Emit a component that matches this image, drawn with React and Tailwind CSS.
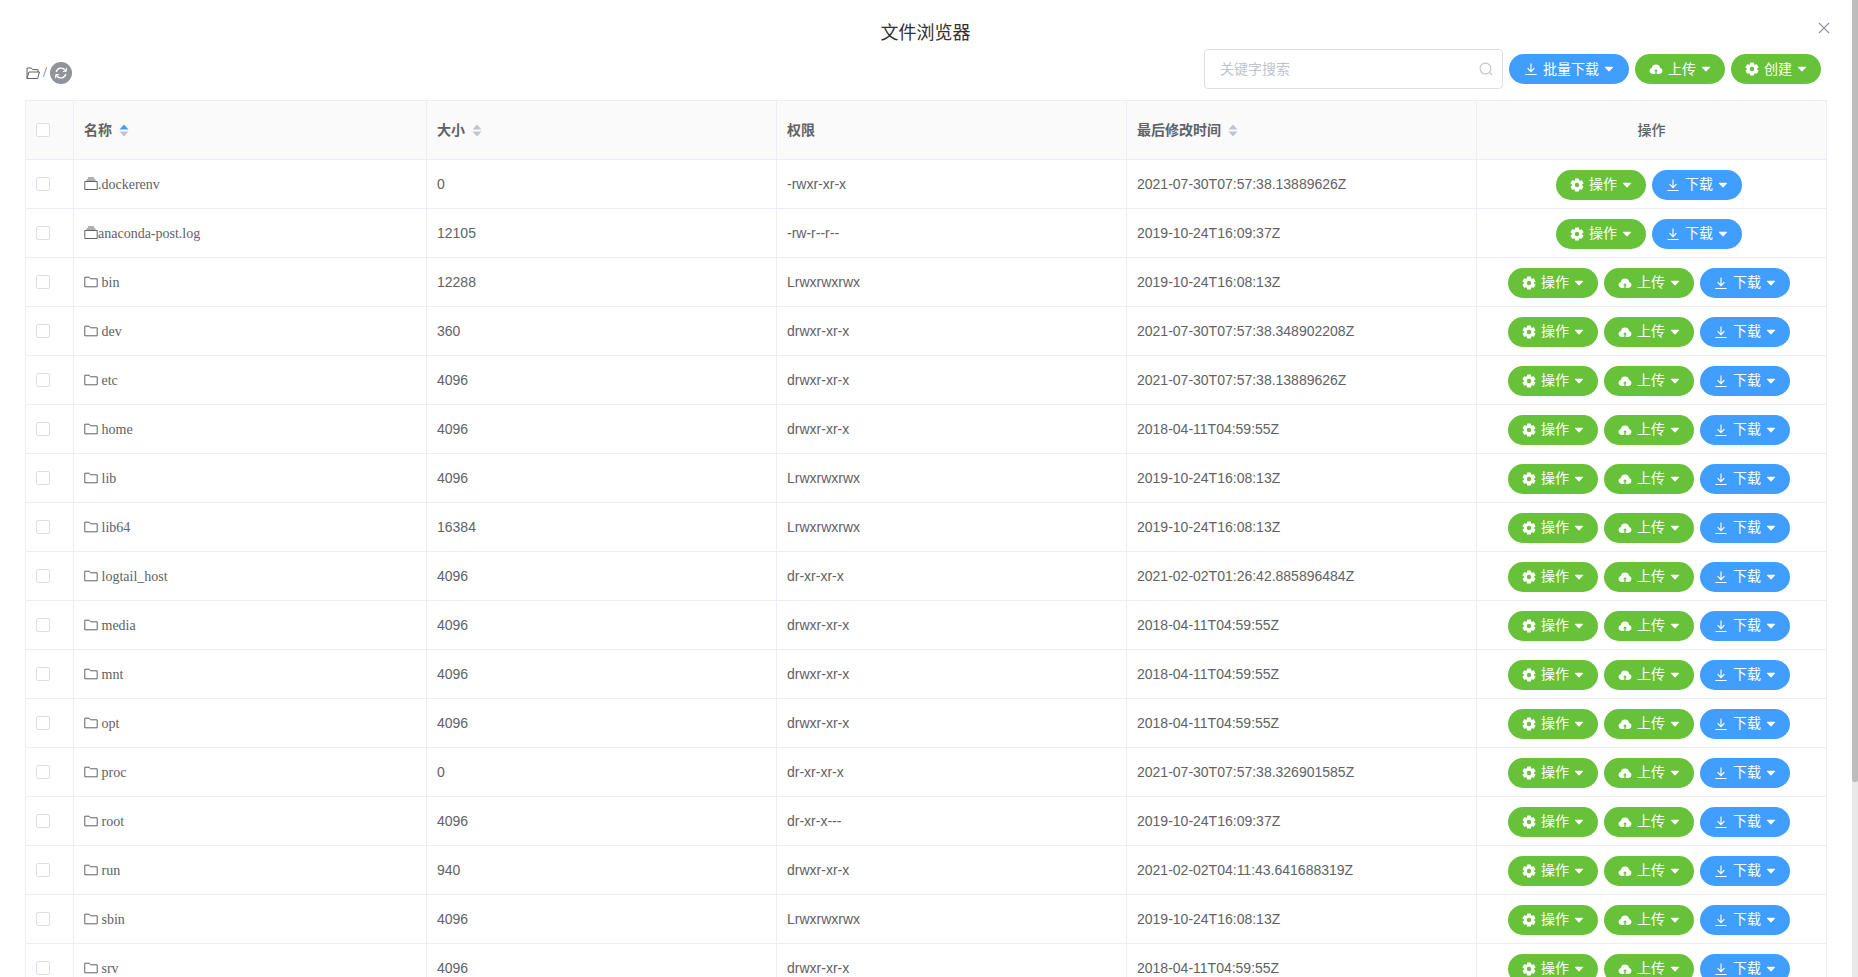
import React from "react";

const rows = [
  [".dockerenv", "0", "-rwxr-xr-x", "2021-07-30T07:57:38.13889626Z", "file"],
  ["anaconda-post.log", "12105", "-rw-r--r--", "2019-10-24T16:09:37Z", "file"],
  ["bin", "12288", "Lrwxrwxrwx", "2019-10-24T16:08:13Z", "dir"],
  ["dev", "360", "drwxr-xr-x", "2021-07-30T07:57:38.348902208Z", "dir"],
  ["etc", "4096", "drwxr-xr-x", "2021-07-30T07:57:38.13889626Z", "dir"],
  ["home", "4096", "drwxr-xr-x", "2018-04-11T04:59:55Z", "dir"],
  ["lib", "4096", "Lrwxrwxrwx", "2019-10-24T16:08:13Z", "dir"],
  ["lib64", "16384", "Lrwxrwxrwx", "2019-10-24T16:08:13Z", "dir"],
  ["logtail_host", "4096", "dr-xr-xr-x", "2021-02-02T01:26:42.885896484Z", "dir"],
  ["media", "4096", "drwxr-xr-x", "2018-04-11T04:59:55Z", "dir"],
  ["mnt", "4096", "drwxr-xr-x", "2018-04-11T04:59:55Z", "dir"],
  ["opt", "4096", "drwxr-xr-x", "2018-04-11T04:59:55Z", "dir"],
  ["proc", "0", "dr-xr-xr-x", "2021-07-30T07:57:38.326901585Z", "dir"],
  ["root", "4096", "dr-xr-x---", "2019-10-24T16:09:37Z", "dir"],
  ["run", "940", "drwxr-xr-x", "2021-02-02T04:11:43.641688319Z", "dir"],
  ["sbin", "4096", "Lrwxrwxrwx", "2019-10-24T16:08:13Z", "dir"],
  ["srv", "4096", "drwxr-xr-x", "2018-04-11T04:59:55Z", "dir"],
];

function Caret() {
  return (
    <svg width="10" height="6" viewBox="0 0 10 6" className="shrink-0">
      <path d="M1.4 0.8h7.2a.5.5 0 0 1 .4.8L5.4 5.2a.5.5 0 0 1-.8 0L1 1.6a.5.5 0 0 1 .4-.8z" fill="#fff" />
    </svg>
  );
}

function Gear() {
  return (
    <svg width="14" height="14" viewBox="0 0 14 14" className="shrink-0">
      {[0, 60, 120, 180, 240, 300].map((a) => (
        <rect key={a} x="5" y="0.4" width="4" height="3.2" rx="0.6" fill="#fff" transform={`rotate(${a} 7 7)`} />
      ))}
      <circle cx="7" cy="7" r="3.7" fill="none" stroke="#fff" strokeWidth="3" />
    </svg>
  );
}

function Cloud() {
  return (
    <svg width="14" height="14" viewBox="0 0 14 14" className="shrink-0">
      <path d="M3.5 12A3.1 3.1 0 0 1 2.9 5.9a4.2 4.2 0 0 1 8.2 0A3.1 3.1 0 0 1 10.5 12z" fill="#fff" />
      <path d="M7 7.2l-2.1 2.1h1.4V12h1.4V9.3h1.4z" fill="#67c23a" />
    </svg>
  );
}

function Download() {
  return (
    <svg width="14" height="14" viewBox="0 0 14 14" fill="none" stroke="#fff" strokeWidth="1.15" className="shrink-0">
      <path d="M7 1.5v8M3.6 6.2 7 9.6l3.4-3.4M1.4 12.5h11.2" />
    </svg>
  );
}

function Btn({ kind, label, w = "w-[90px]" }) {
  const bg = kind === "download" ? "bg-[#409eff]" : "bg-[#67c23a]";
  return (
    <div className={`${w} ${bg} h-[30px] rounded-full flex items-center justify-center gap-[5px] text-white text-[14px] shrink-0`}>
      {kind === "gear" && <Gear />}
      {kind === "upload" && <Cloud />}
      {kind === "download" && <Download />}
      <span>{label}</span>
      <Caret />
    </div>
  );
}

function Check() {
  return <div className="w-[14px] h-[14px] border border-[#dcdfe6] rounded-[2px] bg-white" />;
}

function Sort({ active }) {
  return (
    <svg width="10" height="13" viewBox="0 0 10 13" className="ml-[7px] shrink-0">
      <path d="M5 0.5 9.5 5.5H.5z" fill={active ? "#409eff" : "#c0c4cc"} />
      <path d="M5 12.5.5 7.5h9z" fill="#c0c4cc" />
    </svg>
  );
}

function FolderIcon() {
  return (
    <svg width="14" height="14" viewBox="0 0 14 14" fill="none" stroke="#606266" strokeWidth="1" className="inline-block align-[-2px]">
      <path d="M.8 2.2h4.4l1.2 1.6h6.8v8H.8z" />
    </svg>
  );
}

function FileIcon() {
  return (
    <svg width="14" height="14" viewBox="0 0 14 14" fill="none" stroke="#606266" strokeWidth="1" className="inline-block align-[-2px]">
      <path d="M.8 4.5h12.4v8H.8zM2.5 3h9M4 1h6" />
    </svg>
  );
}

const th = "h-[60px] px-[10px] border-r border-b border-t border-[#ebeef5] bg-[#fafafa] text-left align-middle text-[14px] font-bold text-[#606266]";
const td = "h-[49px] px-[10px] border-r border-b border-[#ebeef5] align-middle text-[14px] text-[#606266]";

export default function App() {
  return (
    <div
      className="flex h-[977px] w-full overflow-hidden bg-white text-[#606266]"
      style={{ fontFamily: '"Liberation Sans","Noto Sans CJK SC",sans-serif' }}
    >
      <main className="relative flex-1 min-w-0">
        <h1 className="h-[49px] pt-[19px] text-center text-[18px] leading-[28px] font-normal text-[#303133] pr-[1px]">文件浏览器</h1>
        <svg width="12" height="12" viewBox="0 0 12 12" className="absolute left-[1818px] top-[22px]" fill="none" stroke="#909399" strokeWidth="1.1">
          <path d="M1 1l10 10M11 1 1 11" />
        </svg>

        <div className="flex items-start justify-between pl-[25px] pr-[31px] h-[51px]">
          <div className="flex items-center gap-[2px] pt-[13px]">
            <svg width="16" height="14" viewBox="0 0 15 14" fill="none" stroke="#606266" strokeWidth="1">
              <path d="M1.5 12.5V2h4.3l1.2 1.6h5.5v2.4M1.5 12.5h10.6L14 6H3.4z" />
            </svg>
            <span className="font-['Liberation_Serif'] text-[14px] leading-[14px] mr-[1px]">/</span>
            <div className="w-[22px] h-[22px] rounded-full bg-[#909399] flex items-center justify-center">
              <svg width="14" height="14" viewBox="0 0 14 14" fill="none" stroke="#fff" strokeWidth="1.3">
                <path d="M2.2 6A5 5 0 0 1 11 4l.9 1M11.8 8A5 5 0 0 1 3 10l-.9-1" />
                <path d="M12.3 1.8v3.6H8.9M1.7 12.2V8.6h3.4" strokeWidth="1" />
              </svg>
            </div>
          </div>
          <div className="flex items-start gap-[6px]">
            <div className="w-[299px] h-[40px] border border-[#dcdfe6] rounded-[4px] flex items-center justify-between pl-[15px] pr-[9px] text-[14px] text-[#c0c4cc]">
              <span>关键字搜索</span>
              <svg width="14" height="14" viewBox="0 0 14 14" fill="none" stroke="#c0c4cc" strokeWidth="1.1">
                <circle cx="6.5" cy="6.5" r="5.4" />
                <path d="M10.5 10.5 13 13" />
              </svg>
            </div>
            <div className="flex gap-[6px] pt-[5px]">
              <Btn kind="download" label="批量下载" w="w-[120px]" />
              <Btn kind="upload" label="上传" />
              <Btn kind="gear" label="创建" />
            </div>
          </div>
        </div>

        <div className="pl-[25px]">
          <table className="table-fixed border-separate border-spacing-0 w-[1801px] border-l border-[#ebeef5]">
            <colgroup>
              <col className="w-[48px]" />
              <col className="w-[353px]" />
              <col className="w-[350px]" />
              <col className="w-[350px]" />
              <col className="w-[350px]" />
              <col className="w-[350px]" />
            </colgroup>
            <thead>
              <tr>
                <th className={th}><Check /></th>
                <th className={th}><div className="flex items-center">名称<Sort active /></div></th>
                <th className={th}><div className="flex items-center">大小<Sort /></div></th>
                <th className={th}>权限</th>
                <th className={th}><div className="flex items-center">最后修改时间<Sort /></div></th>
                <th className={`${th} !text-center !font-medium`}>操作</th>
              </tr>
            </thead>
            <tbody>
              {rows.map(([name, size, perm, time, type]) => (
                <tr key={name}>
                  <td className={td}><Check /></td>
                  <td className={`${td} font-['Liberation_Serif']`}>
                    {type === "dir" ? <FolderIcon /> : <FileIcon />}
                    {type === "dir" ? " " : ""}
                    {name}
                  </td>
                  <td className={td}>{size}</td>
                  <td className={td}>{perm}</td>
                  <td className={td}>{time}</td>
                  <td className={`${td} !pr-[15px]`}>
                    <div className="flex justify-center gap-[6px] pt-[1px]">
                      <Btn kind="gear" label="操作" />
                      {type === "dir" && <Btn kind="upload" label="上传" />}
                      <Btn kind="download" label="下载" />
                    </div>
                  </td>
                </tr>
              ))}
            </tbody>
          </table>
        </div>
      </main>
      <aside className="w-[6px] shrink-0 bg-[#e8e8e8]">
        <div className="h-[782px] bg-[#bcbcbc] rounded-b-[2px]" />
      </aside>
    </div>
  );
}
